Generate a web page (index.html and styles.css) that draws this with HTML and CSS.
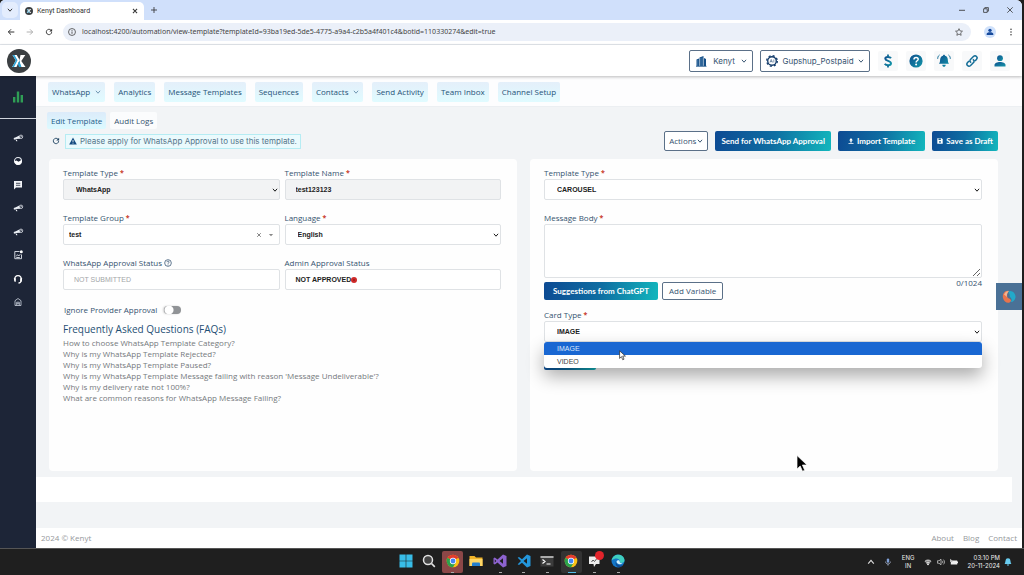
FILE: index.html
```
<!DOCTYPE html>
<html lang="en">
<head>
<meta charset="utf-8">
<title>Kenyt Dashboard</title>
<link rel="stylesheet" href="styles.css">
</head>
<body>
<svg class="defs" width="0" height="0" aria-hidden="true">
  <defs>
    <linearGradient id="teal" x1="0" y1="0" x2="1" y2="1"><stop offset="0" stop-color="#0f4f8f"/><stop offset="1" stop-color="#1296a8"/></linearGradient>
    <symbol id="chev" viewBox="0 0 10 10"><path d="M1.500 3l3.500 4 3.500-4" fill="none" stroke="currentColor" stroke-width="1.600"/></symbol>
    <symbol id="reload" viewBox="0 0 12 12"><path d="M10 6.200A4 4 0 1 1 8.800 3.100L10 4.300" fill="none" stroke="currentColor" stroke-width="1.400"/><path d="M10.700 1v4.200H6.500z" fill="currentColor"/></symbol>
    <symbol id="kx" viewBox="0 0 24 24"><circle cx="12" cy="12" r="12" fill="#3b3f42"/><path d="M5.500 6h4.200l3 5-3.200 7H5.200l3.600-6.600z" fill="#fff"/><path d="M12.300 12l1.200-5.900h4.800l-4 5.900 4.200 6h-4.700z" fill="#fff"/><path d="M5.500 6h2l3 5.300L7 18H5.200l3.600-6.600z" fill="#2ba5d8"/><path d="M12.300 12l2.200 6h-2.500l-1.200-3z" fill="#2ba5d8"/></symbol>
    <symbol id="horn" viewBox="0 0 14 12"><path d="M2 6l2.500-.8L8.500 3l1 4-4.500.2L2.300 8zM4 7.700l1.800.2.500 2H5z" fill="#e9edf3"/><circle cx="10.500" cy="4.600" r="2" fill="#1d2537" stroke="#e9edf3" stroke-width=".9"/><path d="M9.500 5l2-1" stroke="#e9edf3" stroke-width=".8"/></symbol>
    <symbol id="chrome" viewBox="0 0 20 20"><circle cx="10" cy="10" r="9" fill="#fbc116"/><path d="M10 10L2.200 5.500A9 9 0 0 1 17.800 5.500z" fill="#e33b2e"/><path d="M10 10L2.200 5.500A9 9 0 0 0 10 19l3.900-6.700z" fill="#2ba24c"/><circle cx="10" cy="10" r="4.500" fill="#fff"/><circle cx="10" cy="10" r="3.500" fill="#4285f4"/></symbol>
  </defs>
</svg>
<div class="window">
  <div class="tabstrip">
    <button class="tab-search" aria-label="Search tabs"><svg class="i6"><use href="#chev"/></svg></button>
    <div class="tab">
      <svg class="i8"><use href="#kx"/></svg><span class="tab-title">Kenyt Dashboard</span>
      <button class="plain" aria-label="Close tab"><svg class="i6" viewBox="0 0 10 10"><path d="M1.500 1.500l7 7m0-7l-7 7" stroke="#333" stroke-width="1.700"/></svg></button>
    </div>
    <button class="plain new-tab" aria-label="New tab"><svg class="i6" viewBox="0 0 10 10"><path d="M5 0v10M0 5h10" stroke="#333" stroke-width="1.400"/></svg></button>
    <div class="win-controls">
      <button class="plain" aria-label="Minimize"><svg class="i6" viewBox="0 0 10 10"><path d="M0 5.500h10" stroke="#333" stroke-width="1.400"/></svg></button>
      <button class="plain" aria-label="Restore"><svg class="i6" viewBox="0 0 10 10"><path d="M1 3h6v6H1zM3 3V1h6v6H7" fill="none" stroke="#333" stroke-width="1.300"/></svg></button>
      <button class="plain" aria-label="Close"><svg class="i6" viewBox="0 0 10 10"><path d="M0.500 .5l9 9m0-9l-9 9" stroke="#333" stroke-width="1.300"/></svg></button>
    </div>
  </div>
  <div class="toolbar">
    <button class="plain" aria-label="Back"><svg class="i8" viewBox="0 0 12 12"><path d="M11 6H2m4-4L2 6l4 4" fill="none" stroke="#333" stroke-width="1.500"/></svg></button>
    <button class="plain" aria-label="Forward"><svg class="i8" viewBox="0 0 12 12"><path d="M1 6h9M6 2l4 4-4 4" fill="none" stroke="#aaa" stroke-width="1.400"/></svg></button>
    <button class="plain" aria-label="Reload"><svg class="i8"><use href="#reload"/></svg></button>
    <div class="address">
      <svg class="i8" viewBox="0 0 12 12"><circle cx="6" cy="6" r="5.200" fill="none" stroke="#444" stroke-width="1.200"/><path d="M6 5.200v3.500M6 3v1.300" stroke="#444" stroke-width="1.300"/></svg>
      <input class="url" aria-label="Address" value="localhost:4200/automation/view-template?templateId=93ba19ed-5de5-4775-a9a4-c2b5a4f401c4&amp;botid=110330274&amp;edit=true">
      <svg class="i8" viewBox="0 0 12 12"><path d="M6 1l1.500 3.400 3.700.4-2.700 2.500.7 3.700L6 9.100 2.800 11l.7-3.700L.8 4.800l3.700-.4z" fill="none" stroke="#444" stroke-width="1.100"/></svg>
    </div>
    <button class="profile" aria-label="Profile"><svg class="i8" viewBox="0 0 12 12"><circle cx="6" cy="3.500" r="2.500" fill="#174a9c"/><path d="M1 10.500V9c0-3.500 10-3.500 10 0v1.500z" fill="#174a9c"/></svg></button>
    <button class="plain" aria-label="Menu"><svg class="i8" viewBox="0 0 12 12"><g fill="#444"><circle cx="6" cy="1.800" r="1.200"/><circle cx="6" cy="6" r="1.200"/><circle cx="6" cy="10.200" r="1.200"/></g></svg></button>
  </div>

  <header class="header">
    <svg class="logo"><use href="#kx"/></svg>
    <div class="header-tools">
      <button class="picker"><svg class="i12" viewBox="0 0 12 12"><path d="M1.500 4.500L4 3.500V11H1.500zM4.500 2.500l4-1.500V11h-4zM9 3l2 1v7H9z" fill="#154f87"/><path d="M1 11.300h10.500" stroke="#154f87" stroke-width=".8"/><path d="M5.800 3v8M7.200 2.500V11M2.800 5v6" stroke="#8ab4d4" stroke-width=".4"/></svg><span>Kenyt</span><svg class="i6"><use href="#chev"/></svg></button>
      <button class="picker wide"><svg class="i12" viewBox="0 0 14 14"><circle cx="7" cy="7" r="5" fill="#fff" stroke="#143c6b" stroke-width="1.600"/><circle cx="7" cy="7" r="6.200" fill="none" stroke="#143c6b" stroke-width="1.500" stroke-dasharray="2.400 2.470"/><path d="M4.600 8.700l1.500-3.500 1.500 3.500M5.200 7.700h1.900M9.100 5.200v3.500" fill="none" stroke="#143c6b" stroke-width=".6"/></svg><span>Gupshup_Postpaid</span><svg class="i6"><use href="#chev"/></svg></button>
      <button class="tool" aria-label="Billing"><svg class="i14" viewBox="0 0 14 14"><path d="M10 4.300C9 2.600 4.300 2.300 4.300 4.700S10 6.700 10 9.300 4.900 11.600 3.800 9.700" fill="none" stroke="url(#teal)" stroke-width="2"/><path d="M7 .5v2.500M7 11v2.500" stroke="#126c96" stroke-width="1.800"/></svg></button>
      <button class="tool" aria-label="Help"><svg class="i14" viewBox="0 0 14 14"><circle cx="7" cy="7" r="6.600" fill="url(#teal)"/><path d="M5 5.500c0-2.700 4.200-2.500 4.200-.2C9.200 6.800 7.100 6.700 7.100 8.400" fill="none" stroke="#fff" stroke-width="1.500"/><circle cx="7.100" cy="10.500" r="1" fill="#fff"/></svg></button>
      <button class="tool" aria-label="Notifications"><svg class="i14" viewBox="0 0 14 14"><path d="M7 .7c.7 0 1 .5 1 1 4.300 1.300 1.800 5.500 4 8H2c2.200-2.500-.3-6.700 4-8 0-.5.3-1 1-1zM5.300 10.700h3.400c0 2.700-3.400 2.700-3.400 0z" fill="url(#teal)"/><path d="M2.500 1C1.200 2 .7 3.200.7 4.800M11.500 1c1.300 1 1.800 2.200 1.800 3.800" fill="none" stroke="#126c96" stroke-width="1"/></svg></button>
      <button class="tool" aria-label="Links"><svg class="i14" viewBox="0 0 14 14"><path d="M6.200 8.700c-1.700-1-1.500-2.500-.5-3.500l2.700-2.700c2.200-2 5 .8 3 3L10 7M7.800 5.300c1.700 1 1.500 2.500.5 3.500l-2.700 2.700c-2.200 2-5-.8-3-3L4 7" fill="none" stroke="#126c96" stroke-width="1.500"/></svg></button>
      <button class="tool" aria-label="Account"><svg class="i14" viewBox="0 0 14 14"><circle cx="7" cy="4.200" r="2.900" fill="url(#teal)"/><path d="M1.500 12.500V11C1.500 7 12.500 7 12.500 11v1.500z" fill="url(#teal)"/></svg></button>
    </div>
  </header>

  <div class="app">
    <nav class="sidebar" aria-label="Main">
      <a class="side-main" href="#" aria-label="Analytics"><svg class="i12" viewBox="0 0 12 12"><path d="M1 6h2.400v5.500H1zM4.800.5h2.400v11H4.800zM8.600 4H11v7.500H8.600z" fill="#2f9e55"/></svg></a>
      <div class="side-list">
        <a href="#" aria-label="Broadcast"><svg class="i12"><use href="#horn"/></svg></a>
        <a href="#" aria-label="Usage"><svg class="i12" viewBox="0 0 12 12"><circle cx="6" cy="6" r="3.500" fill="none" stroke="#e9edf3" stroke-width="1.100"/><path d="M2.500 6.200l2-.7 2 1.300L9.500 5a3.600 3.600 0 1 1-7 1.200z" fill="#fff"/></svg></a>
        <a href="#" aria-label="Chat"><svg class="i12" viewBox="0 0 12 12"><path d="M2 2h8v6.500H4L2 10.500z" fill="#f1f3f7"/><path d="M4 4.300h4.300M4 6.300h4.300" stroke="#1d2537" stroke-width=".8"/></svg></a>
        <a href="#" aria-label="Campaigns"><svg class="i12"><use href="#horn"/></svg></a>
        <a href="#" aria-label="Promotions"><svg class="i12"><use href="#horn"/></svg></a>
        <a href="#" aria-label="Reports"><svg class="i12" viewBox="0 0 12 12"><path d="M7.500 2.500H2.800v7.200h6.700V5.500M4.300 7.300l1.200-1.600 1.300 1.300 1.500-1.800M4.300 8.500h3.500" fill="none" stroke="#dfe4ec" stroke-width=".9"/><circle cx="9.300" cy="2.700" r="1.500" fill="#fff"/></svg></a>
        <a href="#" aria-label="Support"><svg class="i12" viewBox="0 0 12 12"><path d="M2.800 7.500C1.300 1 10.700 1 9.200 7.500 9 9.500 8 10 6.500 10" fill="none" stroke="#fff" stroke-width="1.300"/><path d="M1.800 5.200h2v3.500H2.500zM10.200 5.200H8.200v3.500h1.300z" fill="#fff"/></svg></a>
        <a href="#" aria-label="Home"><svg class="i12" viewBox="0 0 12 12"><path d="M3 9.500V4.700L6 2.500l3 2.200v4.800zM4.700 9.300V6.200h2.600v3.100M4.700 7.700h2.600" fill="none" stroke="#cdd4df" stroke-width=".8"/></svg></a>
      </div>
    </nav>

    <div class="page">
      <nav class="nav" aria-label="WhatsApp">
        <a href="#">WhatsApp<svg class="i6 nav-chev"><use href="#chev"/></svg></a>
        <a href="#">Analytics</a>
        <a href="#">Message Templates</a>
        <a href="#">Sequences</a>
        <a href="#">Contacts<svg class="i6 nav-chev"><use href="#chev"/></svg></a>
        <a href="#">Send Activity</a>
        <a href="#">Team Inbox</a>
        <a href="#">Channel Setup</a>
      </nav>

      <main class="main">
        <div class="subtabs"><a class="active" href="#">Edit Template</a><a href="#">Audit Logs</a></div>
        <div class="action-row">
          <button class="plain refresh" aria-label="Refresh"><svg class="i8"><use href="#reload"/></svg></button>
          <p class="notice"><svg class="i8" viewBox="0 0 12 12"><path d="M6 .8l5.700 10.400H.3z" fill="#134a80"/><path d="M6 4.500v3.300M6 8.700v1.300" stroke="#fff" stroke-width="1.200"/></svg>Please apply for WhatsApp Approval to use this template.</p>
          <div class="actions">
            <button class="btn outline">Actions<svg class="i6"><use href="#chev"/></svg></button>
            <button class="btn primary send">Send for WhatsApp Approval</button>
            <button class="btn primary import"><svg class="i6" viewBox="0 0 10 10"><path d="M5 0L1.800 4h2v3.500h2.400V4h2zM.8 8.300h8.400v1.400H.8z" fill="#fff"/></svg>Import Template</button>
            <button class="btn primary save"><svg class="i6" viewBox="0 0 10 10"><path d="M.5.5H8l1.500 1.500v7.500h-9z" fill="#fff"/><path d="M2.500 1h4v2.500h-4z" fill="#12608f"/><circle cx="5" cy="6.500" r="1.500" fill="#12608f"/></svg>Save as Draft</button>
          </div>
        </div>

        <div class="cards">
          <section class="card">
            <div class="fields">
              <div class="field"><label for="ttype">Template Type <b>*</b></label><div class="select"><select id="ttype" class="control muted" disabled><option>WhatsApp</option></select><svg class="i6"><use href="#chev"/></svg></div></div>
              <div class="field"><label for="tname">Template Name <b>*</b></label><input id="tname" class="control muted" value="test123123" readonly></div>
              <div class="field"><label for="tgroup">Template Group <b>*</b></label>
                <div class="combo"><input id="tgroup" value="test"><button class="plain" aria-label="Clear"><svg class="i6" viewBox="0 0 10 10"><path d="M2 2l6 6m0-6L2 8" stroke="#777" stroke-width="1.500"/></svg></button><svg class="i6" viewBox="0 0 10 10"><path d="M1.500 3.500h7L5 7z" fill="#888"/></svg></div></div>
              <div class="field"><label for="lang">Language <b>*</b></label><div class="select"><select id="lang" class="control"><option>English</option></select><svg class="i6"><use href="#chev"/></svg></div></div>
              <div class="field"><label for="wstatus">WhatsApp Approval Status <svg class="i8" viewBox="0 0 12 12"><circle cx="6" cy="6" r="5" fill="none" stroke="#2c4c6c" stroke-width="1.100"/><path d="M4.400 4.800c0-2.200 3.300-2 3.300-.1C7.700 5.900 6 5.800 6 7.200M6 8.300v1.200" fill="none" stroke="#2c4c6c" stroke-width="1.100"/></svg></label><input id="wstatus" class="control faded" value="NOT SUBMITTED" readonly></div>
              <div class="field"><span class="label">Admin Approval Status</span><div class="control status">NOT APPROVED<svg class="i6" viewBox="0 0 10 10"><circle cx="5" cy="5" r="5" fill="#d02b2b"/><path d="M3 3l4 4m0-4L3 7" stroke="#8a1818" stroke-width="1"/></svg></div></div>
            </div>
            <label class="toggle">Ignore Provider Approval<input type="checkbox" role="switch"></label>
            <h2 class="faq-title">Frequently Asked Questions (FAQs)</h2>
            <ul class="faq">
              <li><a href="#">How to choose WhatsApp Template Category?</a></li>
              <li><a href="#">Why is my WhatsApp Template Rejected?</a></li>
              <li><a href="#">Why is my WhatsApp Template Paused?</a></li>
              <li><a href="#">Why is my WhatsApp Template Message failing with reason 'Message Undeliverable'?</a></li>
              <li><a href="#">Why is my delivery rate not 100%?</a></li>
              <li><a href="#">What are common reasons for WhatsApp Message Failing?</a></li>
            </ul>
          </section>

          <section class="card right">
            <div class="field"><label for="ctype">Template Type <b>*</b></label><div class="select"><select id="ctype" class="control"><option>CAROUSEL</option></select><svg class="i6"><use href="#chev"/></svg></div></div>
            <div class="field body-field"><label for="body">Message Body <b>*</b></label><textarea id="body" class="textarea"></textarea></div>
            <div class="body-tools">
              <button class="btn primary suggest">Suggestions from ChatGPT</button>
              <button class="btn outline add">Add Variable</button>
              <span class="counter">0/1024</span>
            </div>
            <div class="field card-type"><label for="cardtype">Card Type <b>*</b></label><div class="select"><select id="cardtype" class="control"><option>IMAGE</option><option>VIDEO</option></select><svg class="i6"><use href="#chev"/></svg>
              <ul class="menu" role="listbox" aria-label="Card Type"><li role="option" aria-selected="true">IMAGE</li><li role="option">VIDEO</li></ul></div></div>
            <button class="btn primary under" aria-label="Add card"></button>
          </section>
        </div>
        <div class="strip"></div>
      </main>
      <footer class="footer"><span>2024 © Kenyt</span><a href="#">About</a><a href="#">Blog</a><a href="#">Contact</a></footer>
    </div>
  </div>
</div>

<div class="taskbar">
  <div class="apps">
    <button class="app-icon" aria-label="Start"><svg class="i14" viewBox="0 0 14 14"><path d="M.5.500h6.200v6.200H.5zM7.300.5h6.200v6.200H7.300zM.5 7.300h6.200v6.200H.5zM7.300 7.300h6.200v6.200H7.300z" fill="#38bde8"/></svg></button>
    <button class="app-icon" aria-label="Search"><svg class="i14" viewBox="0 0 14 14"><circle cx="6" cy="6" r="4.500" fill="#444" stroke="#e2e2e2" stroke-width="1.500"/><path d="M9.500 9.500l3.300 3.300" stroke="#e2e2e2" stroke-width="1.700"/></svg></button>
    <button class="app-icon alert open" aria-label="Chrome"><svg class="i14"><use href="#chrome"/></svg></button>
    <button class="app-icon" aria-label="File Explorer"><svg class="i14" viewBox="0 0 14 14"><path d="M.5 2h5l1.500 1.500h6.500V12H.5z" fill="#f0b429"/><path d="M.5 5h13v7H.5z" fill="#ffd766"/><path d="M3 12V9.500q0-1 1-1h6q1 0 1 1V12z" fill="#2580cf"/></svg></button>
    <button class="app-icon open" aria-label="Visual Studio"><svg class="i14" viewBox="0 0 14 14"><path d="M10 .5l3.500 1.500v10L10 13.500 4.500 8.500l-2.700 2L.5 9.700V4.300l1.300-.8 2.700 2zM10 4.200L6.500 7 10 9.800zM1.800 5.500v3L3.300 7z" fill="#8d63cf" fill-rule="evenodd"/></svg></button>
    <button class="app-icon open" aria-label="VS Code"><svg class="i14" viewBox="0 0 14 14"><path d="M10 .5l3.500 1.500v10L10 13.500 5 8.800l-3 2.300L.7 10.200 4 7 .7 3.800 2 2.900l3 2.300zM10 4.200L6.500 7 10 9.800z" fill="#2497dc" fill-rule="evenodd"/></svg></button>
    <button class="app-icon open" aria-label="Terminal"><svg class="i14" viewBox="0 0 14 14"><path d="M.5 2h13v10.500H.5z" fill="#3c3c3c"/><path d="M.5 2h13v2H.5z" fill="#aaa"/><path d="M2.500 5.500l2.500 2-2.500 2M6.500 10h4" fill="none" stroke="#fff" stroke-width="1.200"/></svg></button>
    <button class="app-icon current open" aria-label="Chrome window"><svg class="i14"><use href="#chrome"/></svg></button>
    <button class="app-icon open" aria-label="Messages"><svg class="i14" viewBox="0 0 14 14"><path d="M1 2.500h10.500v7.500H8L6 13 5.500 10H1z" fill="#eee"/><path d="M3.500 8l1.500-2 1.500 1.500L8.500 5" stroke="#555" fill="none"/></svg><span class="badge"></span></button>
    <button class="app-icon open" aria-label="Edge"><svg class="i14" viewBox="0 0 14 14"><circle cx="7" cy="7" r="6.500" fill="#1577c8"/><path d="M.7 6.500C1.500-1.500 13.500-1 13.500 6.500c0 3-4.800 3-4.800 1.300C9.500 4 4 3.500.7 6.500z" fill="#3fcfc0"/><path d="M5 7c-.5 4 4 5.500 7.500 3.500C9 15.500 3 13 5 7z" fill="#104a91"/><path d="M5.500 7.500C6.500 5.500 9 6 8.700 7.800c0 1.200 1.500 1.700 3 1.400-2 1.800-6 1.300-6.200-1.700z" fill="#d4f3ff"/></svg></button>
  </div>
  <div class="tray">
    <svg class="i8" viewBox="0 0 10 10"><path d="M1.500 7L5 3l3.500 4" fill="none" stroke="#ddd" stroke-width="1.400"/></svg>
    <svg class="i8 mic" viewBox="0 0 10 10"><rect x="3.500" y=".5" width="3" height="5.500" rx="1.500" fill="#7fa0d8"/><path d="M2 4.500c0 4 6 4 6 0M5 7.500v2" fill="none" stroke="#b9c6df" stroke-width=".9"/></svg>
    <span class="lang">ENG<br>IN</span>
    <div class="system">
      <svg class="i8" viewBox="0 0 10 10"><path d="M1 4.500c2-2.500 6-2.500 8 0L5 9z" fill="#888"/><path d="M1 4.300c2-2.400 6-2.400 8 0M3 6.300c1-1.100 3-1.100 4 0" fill="none" stroke="#eee"/><circle cx="5" cy="8" r="1" fill="#fff"/></svg>
      <svg class="i8" viewBox="0 0 10 10"><path d="M.5 3.500h2L5 1.500v7L2.500 6.500h-2zM6.500 3.500c.8.800.8 2.200 0 3M8 2c1.700 1.500 1.700 4.500 0 6" fill="none" stroke="#ddd" stroke-width=".9"/></svg>
      <svg class="i8" viewBox="0 0 10 10"><path d="M1 3h8v5H1zM9 4.500h1v2H9z" fill="#eee"/><path d="M0 1l3 2v2H0z" fill="#bbb"/></svg>
    </div>
    <span class="clock">03:10 PM<br>20-11-2024</span>
    <svg class="i8 bell" viewBox="0 0 10 10"><path d="M5 .3C9 .3 7.500 5 9.300 7.500H.7C2.500 5 1 .3 5 .3zM3.500 8h3c0 2-3 2-3 0z" fill="#69cdf0"/></svg>
  </div>
</div>

<button class="chat-widget" aria-label="Assistant"><svg class="i14" viewBox="0 0 14 14"><path d="M7 1C3 0 0 4 1 8c.8 3.500 4 5.500 6.500 4.500C10 11.500 9 9 7 8.500 4.500 8 4.500 3 7 1z" fill="#e8744d"/><path d="M6 1.500c4-2 8 2 7.500 6-.5 3-3 5-5 4.500 2-1.500 1-3.500 0-4.500C7 6 8.500 4.500 6 1.500z" fill="#22a9c9"/><path d="M2 4.500C3 2 5 1 7 1 5 3 4.500 5 5 7z" fill="#f3b48f"/></svg></button>
<svg class="cursor small" viewBox="0 0 12 18"><path d="M1 1v13l3.200-3 2.200 5.300 2.200-1L6.400 10H11z" fill="#fff" stroke="#222" stroke-width="1.200"/></svg>
<svg class="cursor large" viewBox="0 0 12 18"><path d="M1 1v13.500l3.200-3 2.300 5.300 2.200-1L6.400 10.500H11z" fill="#000" stroke="#fff" stroke-width=".7"/></svg>
</body>
</html>
```
FILE: styles.css
```
* { box-sizing: border-box; }
body {
  margin: 0;
  min-height: 100vh;
  display: flex;
  flex-direction: column;
  background: #1e1e1e;
  color: #35536f;
  font: 500 8px/12px "Open Sans", sans-serif;
}
a { color: inherit; text-decoration: none; }
button, input, select, textarea { font: inherit; color: inherit; margin: 0; }
ul, p, h2 { margin: 0; padding: 0; list-style: none; }
svg { display: block; flex: none; }
.defs { position: absolute; }
.i6 { width: 6px; height: 6px; }
.i8 { width: 8px; height: 8px; }
.i12 { width: 12px; height: 12px; }
.i14 { width: 14px; height: 14px; }
.plain { border: 0; padding: 0; background: none; display: flex; align-items: center; color: #333; }

/* browser chrome */
.window {
  flex: 1;
  display: flex;
  flex-direction: column;
  margin-right: 2px;
  background: #fff;
  border-radius: 5px 6px 0 0;
  overflow: hidden;
}
.tabstrip { height: 20px; display: flex; align-items: center; background: #d0e0fb; color: #333; }
.tab-search { width: 16px; height: 16px; margin-left: 2px; padding: 0; border: 0; border-radius: 5px; background: #e4edfd; display: grid; place-items: center; }
.tab { width: 124px; height: 18px; margin: 2px 0 0 2px; padding: 0 6px 0 5px; display: flex; align-items: center; background: #fff; border-radius: 5px 5px 0 0; }
.tab-title { flex: 1; padding-left: 4px; font: 400 7px/12px Roboto, sans-serif; }
.new-tab { margin-left: 7px; }
.win-controls { margin-left: auto; padding-right: 9px; display: flex; gap: 18px; }
.toolbar { height: 25px; padding: 0 7px; display: flex; align-items: center; gap: 11px; border-bottom: 1px solid #e4e8ee; }
.address { flex: 1; height: 18px; margin: 0 2px 0 -1px; padding: 0 8px 0 5px; display: flex; align-items: center; gap: 6px; background: #ebf0f9; border-radius: 9px; }
.url { flex: 1; min-width: 0; padding: 0; border: 0; background: none; color: #444; font: 400 7px/12px "Noto Sans", sans-serif; }
.profile { width: 12px; height: 12px; padding: 0; border: 0; border-radius: 50%; background: #cfe1fb; display: grid; place-items: center; }

/* application header */
.header { position: relative; height: 31px; padding: 0 12px 0 7px; display: flex; align-items: center; justify-content: space-between; background: #fff; box-shadow: 0 1px 3px #0004; }
.logo { width: 24px; height: 24px; }
.header-tools { display: flex; align-items: center; gap: 8px; }
.picker { width: 64px; height: 22px; padding: 0 5px; display: flex; align-items: center; justify-content: space-between; border: 1px solid #5b7088; border-radius: 2px; background: #fff; font-family: Inter, sans-serif; font-weight: 400; }
.picker + .picker { margin-left: -1px; }
.wide { width: 110px; }
.tool { width: 20px; height: 20px; padding: 0; border: 0; border-radius: 2px; background: #f8f9fa; display: grid; place-items: center; }

.app { flex: 1; display: flex; }
.sidebar { width: 36px; background: #1d2537; }
.side-main { height: 43px; display: grid; place-items: center; border-bottom: 1px solid #cfd4dc; }
.side-list { height: 189px; padding-top: 13px; display: flex; flex-direction: column; align-items: center; justify-content: space-between; }
.page { flex: 1; min-width: 0; display: flex; flex-direction: column; background: #f2f4f6; }
.nav { height: 31px; padding: 2px 12px 0; display: flex; align-items: center; gap: 9px; background: #fdfdfe; border-bottom: 1px solid #eceff2; }
.nav a { height: 20px; padding: 0 4px; display: flex; align-items: center; border-radius: 2px; background: linear-gradient(#e4effa, #e0fbff); color: #1f5378; }
.nav-chev { margin-left: 5px; color: #6c93b0; }

.main { flex: 1; padding: 5px 10px 0 0; display: flex; flex-direction: column; }
.subtabs { display: flex; gap: 4px; padding-left: 11px; }
.subtabs a { height: 17px; padding: 0 4px; display: flex; align-items: center; background: #fbfcfd; border-radius: 2px; }
.subtabs .active { background: linear-gradient(#dcebfa, #dcfaff); color: #1f5f8a; }
.action-row { display: flex; align-items: center; padding: 2px 14px 0 16px; }
.refresh { color: #1c4160; }
.notice { height: 15px; margin-left: 5px; padding: 0 3px; display: flex; align-items: center; gap: 3px; border: 1px solid #b6ecf3; background: #eafafd; color: #55758a; font-family: Inter, sans-serif; font-weight: 400; }
.actions { margin-left: auto; display: flex; gap: 7px; }
.btn { height: 20px; padding: 0 8px; display: flex; align-items: center; justify-content: center; gap: 3px; border: 0; border-radius: 2px; white-space: nowrap; }
.primary { background: linear-gradient(100deg, #0d4a93, #0f6ea2 50%, #12b7bd); color: #fff; font-family: Lato, sans-serif; font-weight: 700; }
.outline { padding: 0 4px; border: 1px solid #5b7088; background: #fff; gap: 1px; }
.send { padding: 0 6px; }
.import { padding: 0 10px; }
.add { padding: 0 6px; }
.save { padding: 0 5px; }

.cards { display: grid; grid-template-columns: 1fr 1fr; gap: 13px; padding: 8px 14px 6px 13px; }
.card { min-height: 312px; padding: 7px 16px 7px 14px; background: #fefefe; border-radius: 4px; }
.fields { display: grid; grid-template-columns: 1fr 1fr; gap: 12px 5px; }
.field label, .label { height: 13px; display: flex; align-items: center; gap: 2px; line-height: 12px; }
.field b { color: #c83a2b; font-size: 7px; }
.control, .combo { width: 100%; height: 21px; padding: 0 10px; display: block; border: 1px solid #dfe2e5; border-radius: 2px; background: #fff; color: #222; font: 700 7px/12px "Liberation Sans", Arial, sans-serif; opacity: 1; }
.field { min-width: 0; height: 33px; }
.select { position: relative; }
select.control { padding: 0 12px; appearance: none; }
.select > svg { position: absolute; right: 2px; top: 8px; color: #111; pointer-events: none; }
.muted { background: #f2f3f4; }
.faded { color: #a3a6a9; font-weight: 400; }
.status { display: flex; align-items: center; }
.combo { padding: 0 5px; display: flex; align-items: center; gap: 6px; }
.combo input { flex: 1; min-width: 0; padding: 0; border: 0; background: none; }
.toggle { margin: 15px 0 0 1px; display: flex; align-items: center; gap: 7px; }
.toggle input { appearance: none; width: 17px; height: 8px; margin: 0; border-radius: 4px; background: radial-gradient(circle at 5px 50%, #fff 4px, #0000 5px), #909396; box-shadow: -1px 0 2px #0003; }
.faq-title { margin-top: 6px; color: #1f4f74; font-size: 10px; line-height: 15px; font-weight: 500; }
.faq { color: #75797d; font-weight: 400; line-height: 11px; }

.right .field { height: 34px; margin-bottom: 11px; }
.right .body-field { height: auto; margin-bottom: 0; }
.textarea { width: 100%; height: 54px; padding: 4px; display: block; border: 1px solid #dfe2e5; border-radius: 2px; background: #fff; }
.body-tools { display: flex; align-items: flex-start; gap: 4px; }
.body-tools .btn { height: 18px; margin-top: 4px; }
.body-tools .suggest { padding: 0 9px; }
.counter { margin-left: auto; line-height: 10px; }
.right .card-type { margin: 8px 0 0; }
.menu { position: absolute; z-index: 2; top: 21px; left: 0; right: 0; overflow: hidden; border-radius: 3px; background: #fff; color: #444; font: 400 7px/13px "Liberation Sans", Arial, sans-serif; box-shadow: 0 8px 18px #0005; }
.menu li { padding-left: 13px; }
.menu [aria-selected] { background: #1967d2; color: #dbe8fb; }
.under { width: 52px; height: 19px; margin-top: 9px; }
.strip { height: 25px; background: #fff; }
.footer { height: 20px; padding: 0 5px; display: flex; align-items: center; gap: 9px; background: #fff; color: #96999c; font-weight: 400; }
.footer span { margin-right: auto; }

/* taskbar */
.taskbar { height: 27px; display: grid; grid-template-columns: 1fr auto 1fr; align-items: center; background: #1f1f1f; border-top: 1px solid #555; color: #eee; }
.apps { grid-column: 2; width: 234px; display: flex; justify-content: space-between; }
.app-icon { position: relative; width: 21px; height: 22px; padding: 0 0 2px; border: 0; border-radius: 2px; background: none; display: grid; place-items: center; }
.alert { background: #8b4747; }
.current { background: #333; }
.open::after { content: ""; position: absolute; bottom: 0; left: 9px; width: 3px; height: 1px; background: #aaa; }
.current::after { left: 7px; width: 8px; background: #54bce9; }
.badge { position: absolute; top: 0; right: 1px; width: 9px; height: 9px; border-radius: 50%; background: #e3242b; }
.tray { padding-right: 12px; display: flex; align-items: center; justify-content: flex-end; font: 400 6px/8px Inter, sans-serif; }
.mic { margin-left: 9px; }
.lang { margin-left: 10px; text-align: center; }
.system { margin-left: 10px; display: flex; gap: 5px; }
.clock { margin: 0 4px 0 9px; text-align: right; }

.chat-widget { position: absolute; z-index: 3; right: 2px; top: 283px; width: 26px; height: 27px; padding: 0; border: 0; background: #4a7196; display: grid; place-items: center; }
.cursor { position: absolute; z-index: 4; }
.small { left: 619px; top: 350px; width: 7px; height: 11px; }
.large { left: 796px; top: 454px; width: 12px; height: 19px; }
```
